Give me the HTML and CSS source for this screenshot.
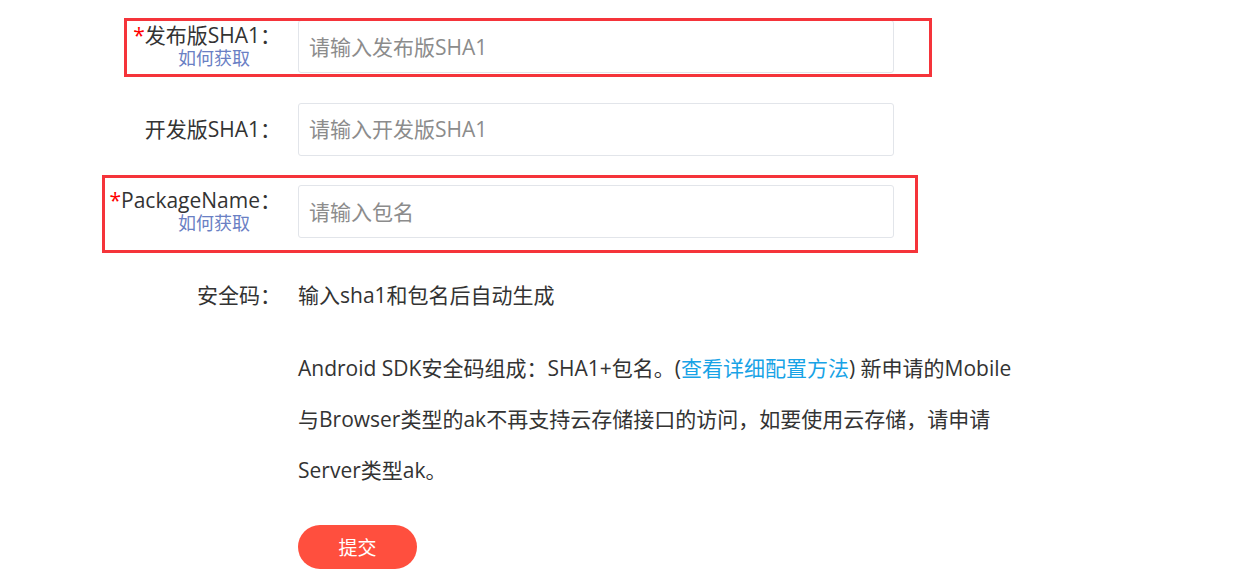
FILE: index.html
```html
<!DOCTYPE html>
<html lang="zh-CN">
<head>
    <meta charset="UTF-8">
    <meta name="viewport" content="width=device-width, initial-scale=1.0">
    <title>创建应用 - Android SDK</title>
    <link rel="stylesheet" href="styles.css">
</head>
<body>

    <form class="key-form">
        <div class="form-row">
            <div class="form-label">
                <span class="label-text"><em class="required">*</em>发布版SHA1：</span>
                <a class="how-link" href="#">如何获取</a>
            </div>
            <input class="form-input" type="text" placeholder="请输入发布版SHA1">
        </div>

        <div class="form-row">
            <div class="form-label">
                <span class="label-text">开发版SHA1：</span>
            </div>
            <input class="form-input" type="text" placeholder="请输入开发版SHA1">
        </div>

        <div class="form-row">
            <div class="form-label">
                <span class="label-text"><em class="required">*</em>PackageName：</span>
                <a class="how-link" href="#">如何获取</a>
            </div>
            <input class="form-input" type="text" placeholder="请输入包名">
        </div>

        <div class="form-row code-row">
            <div class="form-label">
                <span class="label-text">安全码：</span>
            </div>
            <span class="form-value">输入sha1和包名后自动生成</span>
        </div>

        <p class="form-tip">
            Android SDK安全码组成：SHA1+包名。(<a href="#">查看详细配置方法</a>) 新申请的Mobile与Browser类型的ak不再支持云存储接口的访问，如要使用云存储，请申请Server类型ak。
        </p>

        <button class="submit-btn" type="button">提交</button>

        <!-- highlight marks over the required fields -->
        <div class="mark mark-sha1"></div>
        <div class="mark mark-package"></div>
    </form>

</body>
</html>
```

FILE: styles.css
```css
body {
    margin: 0;
    background-color: #ffffff;
    font-family: "Open Sans", "Noto Sans CJK SC", sans-serif;
    color: #333333;
}

.key-form {
    position: relative;
    padding-top: 20px;
}

.form-row {
    display: flex;
    align-items: center;
    margin-bottom: 29.5px;
}

.form-label {
    width: 281px;
    margin-right: 17px;
    display: flex;
    flex-direction: column;
    align-items: flex-end;
    font-size: 21px;
    line-height: 23px;
}

.label-text {
    white-space: nowrap;
}

.required {
    font-style: normal;
    color: #f00;
}

.how-link {
    margin-right: 31px;
    font-size: 18px;
    line-height: 23px;
    color: #6a80c4;
    text-decoration: none;
}

.form-input {
    width: 596px;
    height: 53px;
    box-sizing: border-box;
    padding: 0 10px;
    border: 1px solid #e2e5ea;
    border-radius: 3px;
    font-family: inherit;
    font-size: 21px;
    color: #333333;
    outline: none;
}

.form-input::placeholder {
    color: #8c8c8c;
}

.code-row {
    margin-top: 42px;
    margin-bottom: 0;
}

.form-value {
    font-size: 21px;
    line-height: 30px;
}

.form-label,
.form-value {
    flex-shrink: 0;
}

.form-tip {
    width: 722px;
    margin: 33px 0 0 298px;
    font-size: 21px;
    line-height: 51px;
}

.form-tip a {
    color: #18a3e6;
    text-decoration: none;
}

.submit-btn {
    display: block;
    margin: 29px 0 0 298px;
    width: 119px;
    height: 44px;
    border: none;
    border-radius: 22px;
    background-color: #ff4f3e;
    color: #ffffff;
    font-family: inherit;
    font-size: 19px;
    cursor: pointer;
}

/* red annotation boxes */
.mark {
    position: absolute;
    border: 3px solid #f5343a;
    pointer-events: none;
}

.mark-sha1 {
    left: 124px;
    top: 18px;
    width: 802px;
    height: 53px;
}

.mark-package {
    left: 102px;
    top: 175px;
    width: 810px;
    height: 72px;
}
```
